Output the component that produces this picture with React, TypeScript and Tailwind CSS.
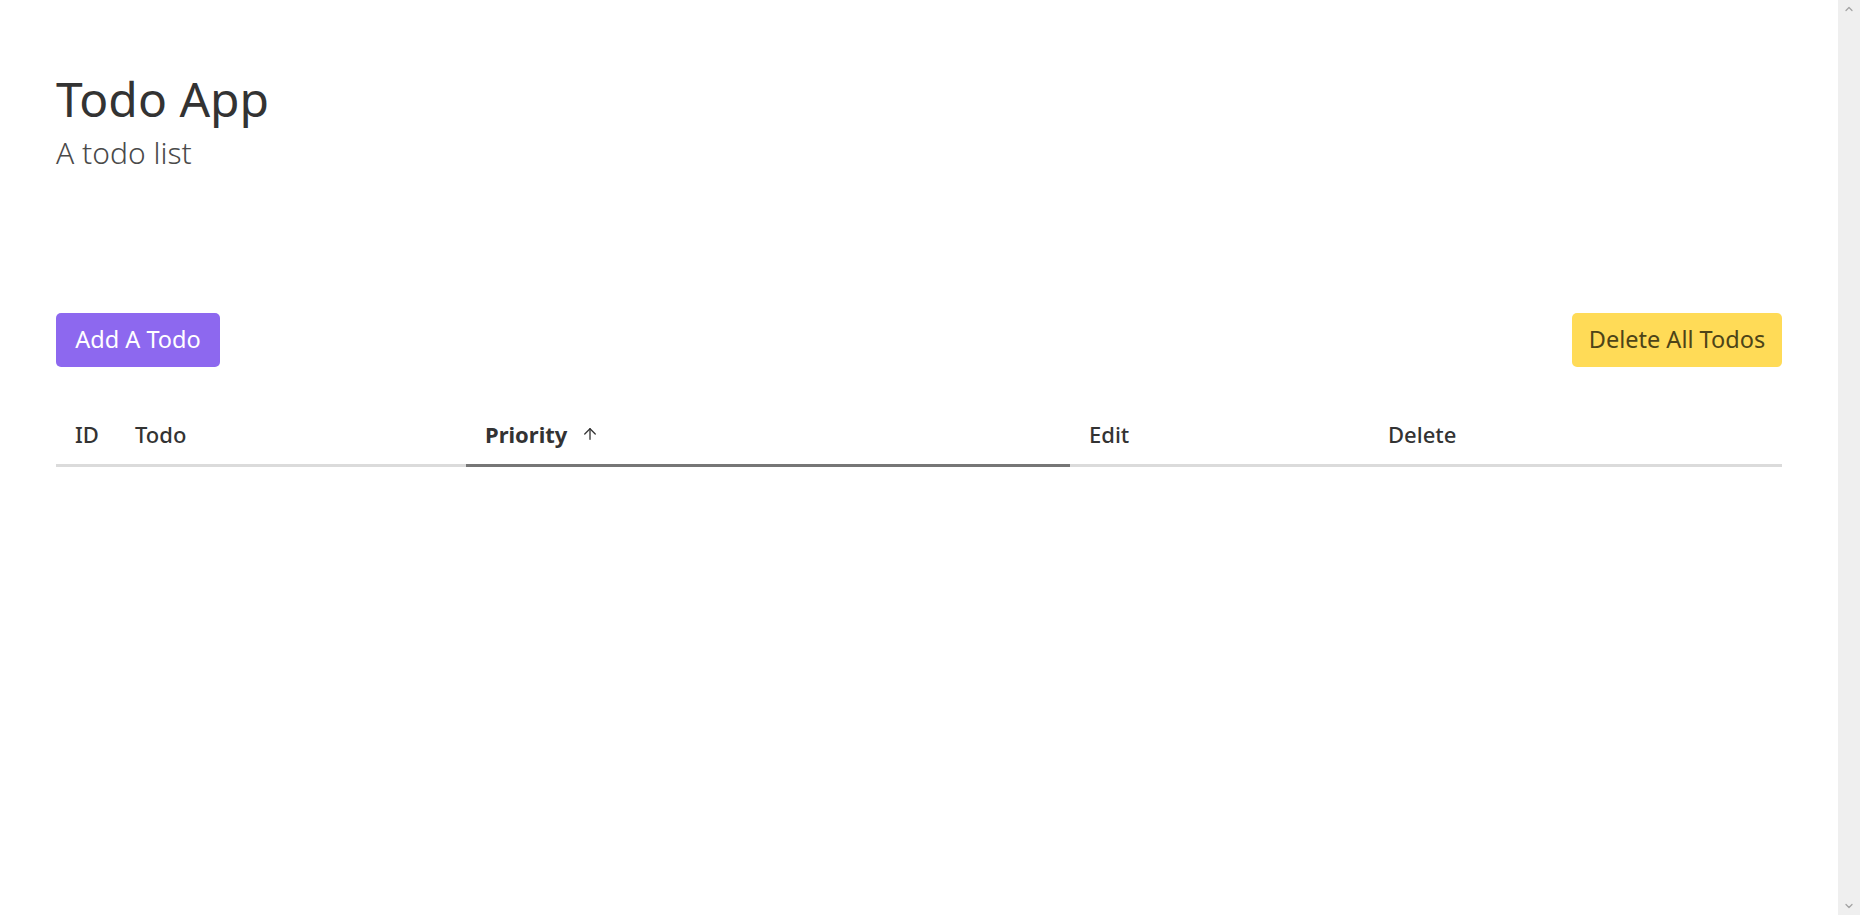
import React from 'react';
import { ArrowUp, ChevronUp, ChevronDown } from 'lucide-react';

const columns = [
  { label: 'ID', width: 'w-[60px]' },
  { label: 'Todo', width: 'w-[350px]' },
  { label: 'Priority', width: 'w-[604px]', sorted: true },
  { label: 'Edit', width: 'w-[299px]' },
  { label: 'Delete', width: 'w-[413px]' },
];

const App = () => {
  return (
    <div className="flex h-screen bg-white font-['Noto_Sans',sans-serif] text-[#333333]">
      <main className="flex-1 overflow-hidden px-[56px] pt-[69px]">
        <header>
          <h1 className="text-[48px] leading-[60px] text-[#333333]">Todo App</h1>
          <p className="mt-[7px] text-[30px] font-light leading-[34px] text-[#4a4a4a]">A todo list</p>
        </header>

        <div className="mt-[143px] flex items-center justify-between">
          <button className="h-[54px] w-[164px] rounded-[5px] bg-[#8d68ef] text-[23.5px] text-white">
            Add A Todo
          </button>
          <button className="h-[54px] w-[210px] rounded-[5px] bg-[#ffdb57] text-[23.5px] text-[#4d4417]">
            Delete All Todos
          </button>
        </div>

        <table className="mt-[38px] w-full table-fixed border-collapse">
          <thead>
            <tr>
              {columns.map((col) => (
                <th
                  key={col.label}
                  className={`${col.width} border-b-[3px] pb-[16px] pl-[19px] pt-[15px] text-left text-[22px] leading-[28px] ${
                    col.sorted ? 'border-[#767676] font-bold' : 'border-[#dbdbdb] font-medium'
                  }`}
                >
                  <span className="inline-flex items-center gap-[14px]">
                    {col.label}
                    {col.sorted && <ArrowUp size={18} strokeWidth={1.75} />}
                  </span>
                </th>
              ))}
            </tr>
          </thead>
          <tbody />
        </table>
      </main>

      <div className="flex w-[22px] flex-col items-center justify-between bg-[#efefef] py-[3px] text-[#a3a3a3]">
        <ChevronUp size={12} strokeWidth={2.5} />
        <ChevronDown size={12} strokeWidth={2.5} />
      </div>
    </div>
  );
};

export default App;
